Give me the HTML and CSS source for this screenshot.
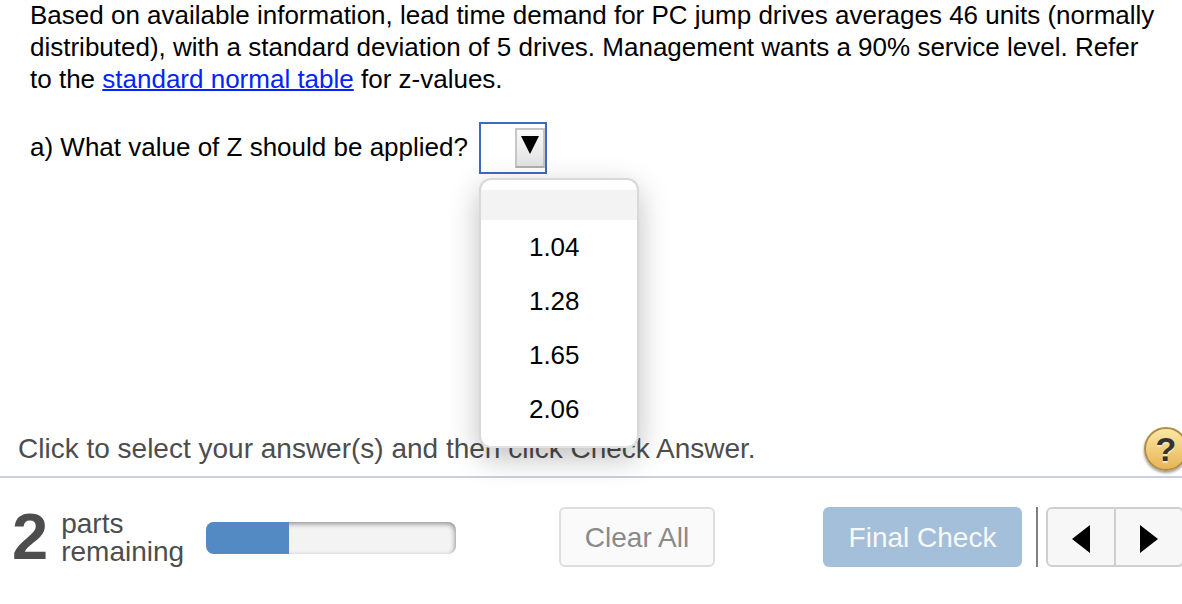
FILE: index.html
```html
<!DOCTYPE html>
<html lang="en">
<head>
  <meta charset="UTF-8">
  <meta name="viewport" content="width=device-width, initial-scale=1">
  <title>Lead Time Demand</title>
  <link rel="stylesheet" href="styles.css">
</head>
<body>

  <main class="question">
    <p class="question-text">Based on available information, lead time demand for PC jump drives averages 46 units (normally distributed), with a standard deviation of 5 drives. Management wants a 90% service level. Refer to the <a href="#">standard normal table</a> for z-values.</p>

    <div class="answer-row">
      <label for="zValue">a) What value of Z should be applied?</label>
      <div class="dropdown">
        <select id="zValue">
          <option value=""></option>
          <option>1.04</option>
          <option>1.28</option>
          <option>1.65</option>
          <option>2.06</option>
        </select>
        <span class="dropdown-arrow" aria-hidden="true">
          <svg width="20" height="18" viewBox="0 0 20 18"><path d="M1 0h18L10 18z"/></svg>
        </span>
        <ul class="menu" id="zMenu" role="listbox" aria-label="Z value">
          <li class="menu-blank" role="option" aria-selected="true"></li>
          <li role="option">1.04</li>
          <li role="option">1.28</li>
          <li role="option">1.65</li>
          <li role="option">2.06</li>
        </ul>
      </div>
    </div>
  </main>

  <div class="hint">
    <span>Click to select your answer(s) and then click Check Answer.</span>
    <button class="help" type="button">?</button>
  </div>

  <footer class="toolbar">
    <div class="parts">
      <strong class="parts-count">2</strong>
      <span class="parts-label">parts<br>remaining</span>
    </div>
    <div class="progress" role="progressbar" aria-valuenow="33" aria-valuemin="0" aria-valuemax="100">
      <div class="progress-fill" style="width: 33%"></div>
    </div>
    <button class="clear" type="button">Clear All</button>
    <button class="check" type="button">Final Check</button>
    <div class="nav">
      <button type="button" aria-label="Previous">
        <svg width="18" height="28" viewBox="0 0 18 28"><path d="M18 0v28L0 14z"/></svg>
      </button>
      <button type="button" aria-label="Next">
        <svg width="18" height="28" viewBox="0 0 18 28"><path d="M0 0v28l18-14z"/></svg>
      </button>
    </div>
  </footer>

  <script>
    const select = document.getElementById("zValue");

    document.querySelectorAll("#zMenu li").forEach(function (item) {
      item.addEventListener("click", function () {
        select.value = item.textContent;
      });
    });
  </script>

</body>
</html>
```

FILE: styles.css
```css
* {
  box-sizing: border-box;
}

body {
  display: flex;
  flex-direction: column;
  min-height: 100vh;
  margin: 0;
  overflow: hidden;
  background: #fff;
  font-family: "Liberation Sans", Arial, sans-serif;
  font-size: 28px;
  color: #4d4d4d;
}

button,
select {
  font: inherit;
  cursor: pointer;
}

/* question */

.question {
  flex: 1;
  padding: 0 26px 0 30px;
  margin-top: -1px;
  font-size: 26px;
  line-height: 32px;
  color: #000;
}

.question-text {
  margin: 0 0 27px;
}

.question-text a {
  color: #0023ff;
  text-decoration-thickness: 2px;
}

.answer-row {
  display: flex;
  align-items: center;
  gap: 11px;
}

.answer-row label {
  padding-bottom: 2px;
}

.dropdown {
  position: relative;
}

.dropdown select {
  display: block;
  width: 68px;
  height: 52px;
  padding: 0 34px 0 4px;
  border: 2px solid #3f6ac4;
  border-radius: 0;
  background: #fff;
  appearance: none;
  outline: none;
}

.dropdown-arrow {
  position: absolute;
  top: 6px;
  right: 2px;
  display: flex;
  justify-content: center;
  width: 30px;
  height: 40px;
  padding-top: 6px;
  border: 2px solid #c6c6c6;
  border-bottom-color: #b0b0b0;
  background: linear-gradient(#fafafa, #e2e2e2);
  pointer-events: none;
}

.menu {
  position: absolute;
  top: 56px;
  left: 0;
  z-index: 1;
  width: 160px;
  margin: 0;
  padding: 10px 0;
  border: 2px solid #d8d8d8;
  border-bottom-color: #e2e2e2;
  border-radius: 12px;
  background: #fff;
  box-shadow: 0 10px 30px rgba(0, 0, 0, 0.25);
  list-style: none;
}

.menu li {
  padding-left: 48px;
  line-height: 54px;
  cursor: pointer;
}

.menu .menu-blank {
  height: 30px;
  background: #f3f3f3;
}

/* instruction line */

.hint {
  display: flex;
  align-items: center;
  justify-content: space-between;
  padding: 0 0 5px 18px;
  margin-right: -6px;
  border-bottom: 2px solid #cdcfde;
}

.help {
  width: 44px;
  height: 44px;
  padding: 0;
  border: 2px solid #b08d45;
  border-radius: 50%;
  background: linear-gradient(#fae8a4, #e8b455);
  box-shadow: 0 2px 3px rgba(0, 0, 0, 0.4);
  font-size: 34px;
  font-weight: bold;
  line-height: 40px;
  color: #333;
  text-shadow: 0 2px 0 #f7e3b0;
}

/* bottom toolbar */

.toolbar {
  display: flex;
  align-items: center;
  padding: 29px 0 37px 12px;
  margin-right: -2px;
}

.parts {
  display: flex;
  align-items: center;
  gap: 13px;
  line-height: 28px;
}

.parts-label {
  padding-top: 2px;
}

.parts-count {
  font-size: 65px;
  line-height: 60px;
}

.progress {
  width: 250px;
  height: 32px;
  margin: 2px 0 0 22px;
  border-radius: 8px;
  overflow: hidden;
  background: #f3f3f3;
  box-shadow: inset -1px 2px 5px rgba(0, 0, 0, 0.4);
}

.progress-fill {
  height: 100%;
  background: #548ac4;
}

.clear,
.check {
  height: 60px;
  padding: 2px 0 0;
  border-radius: 6px;
}

.clear {
  width: 156px;
  margin-left: auto;
  border: 2px solid #dedede;
  background: #fafafa;
  color: #8a8a8a;
}

.check {
  width: 199px;
  margin-left: 108px;
  border: 0;
  background: #a4bfd9;
  color: #f7f9fb;
}

.nav {
  display: flex;
  margin-left: 14px;
  padding-left: 8px;
  border-left: 2px solid #808080;
}

.nav button {
  display: flex;
  align-items: center;
  justify-content: center;
  width: 70px;
  height: 60px;
  padding: 4px 0 0;
  border: 2px solid #cfcfcf;
  border-radius: 6px 0 0 6px;
  background: #f7f7f7;
}

.nav button + button {
  margin-left: -2px;
  border-radius: 0 6px 6px 0;
}
```
